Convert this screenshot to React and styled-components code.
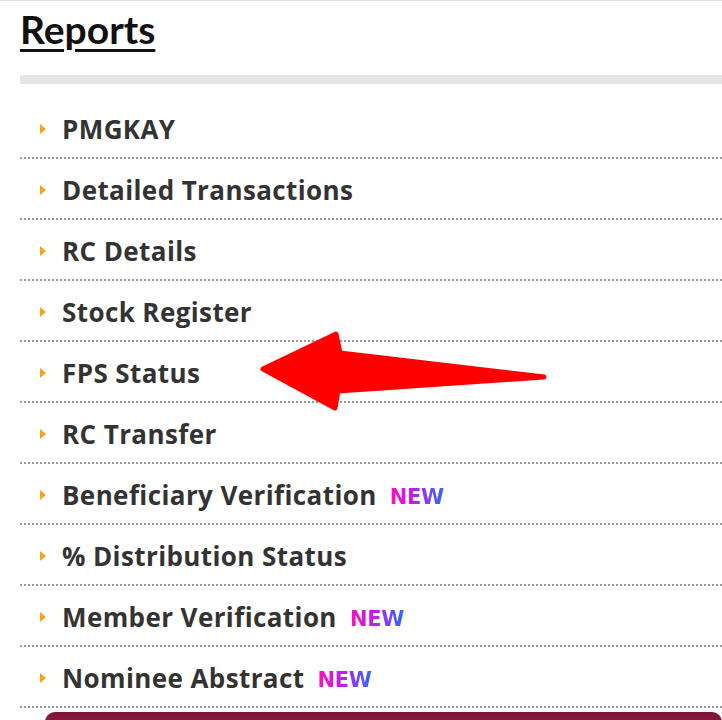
import React from "react";
import styled, { createGlobalStyle } from "styled-components";

const GlobalStyle = createGlobalStyle`
  body {
    margin: 0;
    background: #fff;
    font-family: "Open Sans", sans-serif;
  }
`;

const Page = styled.div`
  position: relative;
  width: 722px;
  height: 720px;
  overflow: hidden;
  border-top: 1px solid #e2e2e2;
  box-sizing: border-box;
`;

const Content = styled.div`
  padding-left: 20px;
`;

const Title = styled.h1`
  margin: 0;
  padding-top: 6px;
  height: 74px;
  font-family: Lato, sans-serif;
  font-size: 39px;
  font-weight: 700;
  color: #111;
  text-decoration: underline;
  text-decoration-thickness: 3px;
  text-underline-offset: 5px;
  line-height: 44px;
  box-sizing: border-box;
`;

const Rule = styled.div`
  height: 9px;
  background: #e6e6e6;
  margin-bottom: 14px;
`;

const List = styled.ul`
  list-style: none;
  margin: 0;
  padding: 0;
`;

const Row = styled.li`
  display: flex;
  align-items: center;
  height: 61px;
  box-sizing: border-box;
  border-bottom: 2px dotted #9a9a9a;
  padding-left: 20px;
  padding-top: 2px;
`;

const Bullet = styled.span`
  width: 0;
  height: 0;
  border-top: 5.5px solid transparent;
  border-bottom: 5.5px solid transparent;
  border-left: 6px solid #f5a21c;
  margin-right: 16px;
`;

const Label = styled.span`
  font-family: "Open Sans", sans-serif;
  font-size: 26px;
  font-weight: 700;
  color: #333;
  letter-spacing: 0.4px;
`;

const NewTag = styled.span`
  margin-left: 13px;
  margin-top: 4px;
  font-family: "DejaVu Sans", sans-serif;
  font-size: 21px;
  font-weight: 700;
  letter-spacing: -0.3px;
  background: linear-gradient(90deg, #ff10b8 0%, #c21cf0 45%, #2a6bff 100%);
  -webkit-background-clip: text;
  background-clip: text;
  color: transparent;
`;

const Footer = styled.div`
  height: 12px;
  margin: 4px 0 0 25px;
  border-radius: 10px 10px 0 0;
  background: linear-gradient(180deg, #7a1436, #8e1a40);
`;

const Pointer = styled.svg`
  position: absolute;
  left: 0;
  top: 0;
  pointer-events: none;
`;

const items = [
  { label: "PMGKAY" },
  { label: "Detailed Transactions" },
  { label: "RC Details" },
  { label: "Stock Register" },
  { label: "FPS Status" },
  { label: "RC Transfer" },
  { label: "Beneficiary Verification", isNew: true },
  { label: "% Distribution Status" },
  { label: "Member Verification", isNew: true },
  { label: "Nominee Abstract", isNew: true },
];

export default function App() {
  return (
    <Page>
      <GlobalStyle />
      <Content>
        <Title>Reports</Title>
        <Rule />
        <List>
          {items.map((item) => (
            <Row key={item.label}>
              <Bullet />
              <Label>{item.label}</Label>
              {item.isNew && <NewTag>NEW</NewTag>}
            </Row>
          ))}
        </List>
        <Footer />
      </Content>
      <Pointer width="722" height="720" viewBox="0 0 722 720">
        <path
          d="M263 368 L336 333 L340 352 L544 376 L338 390 L335 407 Z"
          fill="#ff0000"
          stroke="#ff0000"
          strokeWidth="5"
          strokeLinejoin="round"
        />
      </Pointer>
    </Page>
  );
}
